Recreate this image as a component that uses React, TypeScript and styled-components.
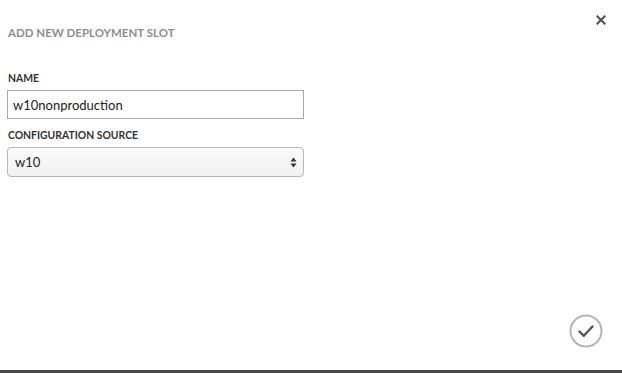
import React from "react";
import styled, { createGlobalStyle } from "styled-components";

const Global = createGlobalStyle`
  html, body { margin: 0; padding: 0; background: #fff; }
  * { box-sizing: border-box; }
  svg { display: block; }
`;

const Dialog = styled.div`
  position: relative;
  width: 622px;
  height: 373px;
  background: #fff;
  border-bottom: 3px solid #4a4a4a;
  font-family: Lato, "Open Sans", sans-serif;
  padding: 26px 0 0 8px;
  display: flex;
  flex-direction: column;
`;

const Title = styled.h1`
  margin: 0 0 31px 0;
  font-size: 11.5px;
  font-weight: 700;
  color: #8e8e8e;
  line-height: 14px;
`;

const Field = styled.div`
  display: flex;
  flex-direction: column;
  margin-bottom: 9px;
`;

const Label = styled.label`
  font-size: 10.4px;
  font-weight: 700;
  color: #333;
  line-height: 14px;
  margin-bottom: 5px;
`;

const TextInput = styled.div`
  width: 297px;
  height: 29px;
  margin-left: -1px;
  border: 1px solid #a9a9a9;
  background: #fff;
  padding: 0 5px;
  display: flex;
  align-items: center;
  font-size: 13px;
  color: #222;
`;

const Select = styled.div`
  width: 297px;
  height: 30px;
  margin-left: -1px;
  border: 1px solid #b8b8b8;
  border-radius: 4px;
  background: linear-gradient(#fbfbfb, #f1f1f1);
  padding: 0 6px 0 7px;
  display: flex;
  align-items: center;
  justify-content: space-between;
  font-size: 13px;
  color: #222;
`;

const CloseButton = styled.div`
  position: absolute;
  top: 15px;
  right: 16px;
  width: 10px;
  height: 10px;
`;

const ConfirmButton = styled.div`
  position: absolute;
  right: 19px;
  bottom: 22px;
  width: 34px;
  height: 34px;
`;

export default function App() {
  return (
    <>
      <Global />
      <Dialog>
        <Title>ADD NEW DEPLOYMENT SLOT</Title>
        <Field>
          <Label>NAME</Label>
          <TextInput>w10nonproduction</TextInput>
        </Field>
        <Field>
          <Label>CONFIGURATION SOURCE</Label>
          <Select>
            <span>w10</span>
            <svg width="7" height="11" viewBox="0 0 7 11">
              <path d="M3.5 0.5 L6.5 4.5 L0.5 4.5 Z" fill="#333" />
              <path d="M3.5 10.5 L6.5 6.5 L0.5 6.5 Z" fill="#333" />
            </svg>
          </Select>
        </Field>
        <CloseButton>
          <svg width="10" height="10" viewBox="0 0 10 10">
            <path d="M1.5 1.5 L8.5 8.5 M8.5 1.5 L1.5 8.5" stroke="#555" strokeWidth="2.2" strokeLinecap="square" />
          </svg>
        </CloseButton>
        <ConfirmButton>
          <svg width="34" height="34" viewBox="0 0 34 34">
            <circle cx="17" cy="17" r="15.5" fill="none" stroke="#b5b5b5" strokeWidth="2" />
            <path d="M10.5 17.5 L14.8 21.8 L23.5 12.5" fill="none" stroke="#555" strokeWidth="2.4" strokeLinecap="round" strokeLinejoin="round" />
          </svg>
        </ConfirmButton>
      </Dialog>
    </>
  );
}
